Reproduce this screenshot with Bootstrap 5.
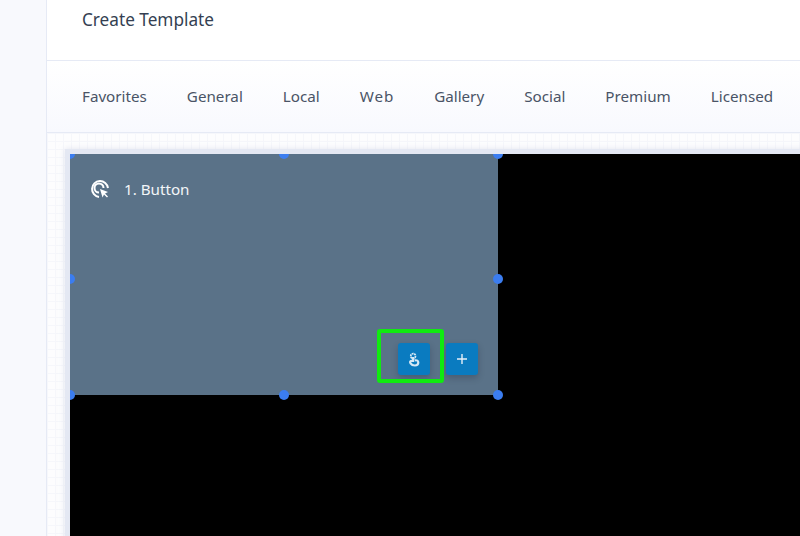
<!DOCTYPE html>
<html lang="en">
<head>
<meta charset="utf-8">
<title>Create Template</title>
<link href="https://cdn.jsdelivr.net/npm/bootstrap@5.3.0/dist/css/bootstrap.min.css" rel="stylesheet">
<style>
html,body{height:536px;overflow:hidden;background:#f8f9fd}
body{font-family:"Noto Sans","Lato",sans-serif;color:#3f4a5c}
.rail{width:47px;height:536px;flex:none;background:#f8f9fd;border-right:1px solid #e6eaf5}
.head-bar{height:61px;padding:8px 0 0 35px;background:#fff;border-bottom:1px solid #e6eaf5;font-size:17.2px;color:#343f52;line-height:24px}
.tab-bar{height:72px;padding-left:35px;gap:40px;font-size:15.2px;color:#4a5466;background:linear-gradient(#fff,#f8f9fe);border-bottom:1px solid #e6eaf5;white-space:nowrap}
.tab-wide{letter-spacing:.9px}
.stage{height:403px;padding:16px 0 0 18px;background-color:#fdfdfe;background-image:linear-gradient(#f6f7fb 1px,transparent 1px),linear-gradient(90deg,#f6f7fb 1px,transparent 1px);background-size:8px 8px;overflow:hidden}
.frame{height:400px;width:800px;background:#000;border:5px solid #e4e8f3;border-right:0;border-bottom:0;box-shadow:0 0 6px rgba(200,205,225,.5);overflow:hidden}
.tile{width:428px;height:241px;background:#5a7288;color:#fff;position:relative;padding:24px 20px 0 20px}
.tile-label{font-size:15.2px;gap:14px;line-height:22px;color:#f2f5f8}
.tool{width:32px;height:32px;background:#0a7bc0;border-radius:3px;box-shadow:0 3px 6px rgba(20,30,50,.25);color:#fff}
.tools{position:absolute;right:20px;top:189px;gap:16px}
.dot{position:absolute;width:10px;height:10px;border-radius:50%;background:#3b7df0;margin:-5px 0 0 -5px}
.focus-box{position:absolute;left:307px;top:175px;width:67px;height:54px;border:4px solid #10ea10;border-radius:3px}
</style>
</head>
<body>
<div class="d-flex">
  <div class="rail"></div>
  <div class="flex-grow-1 overflow-hidden">
    <div class="head-bar">Create Template</div>
    <nav class="tab-bar d-flex align-items-center">
      <span>Favorites</span><span>General</span><span>Local</span><span class="tab-wide">Web</span><span>Gallery</span><span>Social</span><span>Premium</span><span>Licensed</span>
    </nav>
    <div class="stage">
      <div class="frame">
        <div class="tile">
          <div class="tile-label d-flex align-items-center">
            <svg width="20" height="20" viewBox="0 0 20 20" fill="none" stroke="#fff" stroke-width="2"><path d="M9 18A8 8 0 1 1 18 9"/><path d="M9 13.500A4.500 4.500 0 1 1 13.500 9"/><path d="M10 10l8 3-3 1.500 3 3-1 1-3-3-1.500 3z" fill="#fff" stroke="none"/></svg>
            <span>1. Button</span>
          </div>
          <div class="tools d-flex">
            <div class="tool d-flex align-items-center justify-content-center">
              <svg width="12" height="15" viewBox="0 0 14 16" fill="none" stroke="#d6e8f5" stroke-width="2"><circle cx="6" cy="4" r="2.800" stroke-dasharray="2 .6"/><path d="M6 5v4.500H4C2.500 9.500 2 11 3 12.500 4 14 5.500 15 8 15c2.500 0 4-1.500 4-3.500S10.500 8.500 8 9" stroke-width="2.600"/></svg>
            </div>
            <div class="tool d-flex align-items-center justify-content-center">
              <svg width="10" height="10" viewBox="0 0 10 10" stroke="#e6f0f8" stroke-width="1.400"><path d="M5 0v10M0 5h10"/></svg>
            </div>
          </div>
          <div class="focus-box"></div>
          <span class="dot" style="left:0;top:0"></span>
          <span class="dot" style="left:214px;top:0"></span>
          <span class="dot" style="left:428px;top:0"></span>
          <span class="dot" style="left:0;top:125px"></span>
          <span class="dot" style="left:428px;top:125px"></span>
          <span class="dot" style="left:0;top:241px"></span>
          <span class="dot" style="left:214px;top:241px"></span>
          <span class="dot" style="left:428px;top:241px"></span>
        </div>
      </div>
    </div>
  </div>
</div>
<script src="https://cdn.jsdelivr.net/npm/bootstrap@5.3.0/dist/js/bootstrap.bundle.min.js"></script>
</body>
</html>
